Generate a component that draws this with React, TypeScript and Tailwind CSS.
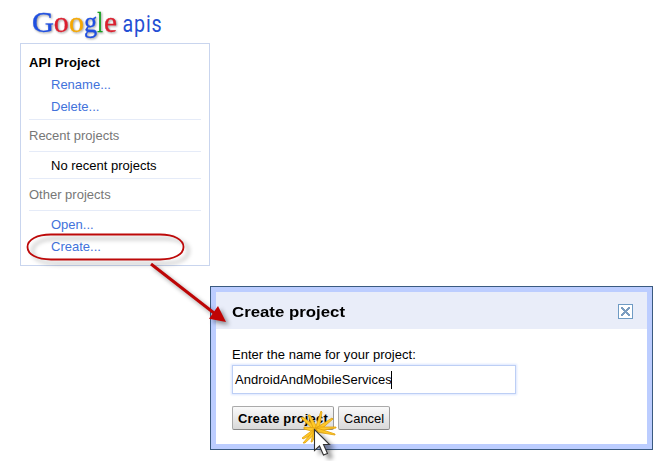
import React from "react";

function Logo() {
  return (
    <svg className="block h-[43px] w-[200px]" viewBox="0 0 200 43">
      <g
        className="font-['Liberation_Serif',serif] text-[29.5px] [filter:drop-shadow(1px_1px_1px_rgba(0,0,0,0.4))]"
        strokeWidth="0.3"
      >
        <text x="32" y="32" fill="#1f4fe0" stroke="#1f4fe0" textLength="22" lengthAdjust="spacingAndGlyphs">G</text>
        <text x="53.8" y="32" fill="#dc1f2e" stroke="#dc1f2e" textLength="15" lengthAdjust="spacingAndGlyphs">o</text>
        <text x="69" y="32" fill="#f5a800" stroke="#f5a800" textLength="15" lengthAdjust="spacingAndGlyphs">o</text>
        <text x="84" y="32" fill="#1f4fe0" stroke="#1f4fe0" textLength="13.2" lengthAdjust="spacingAndGlyphs">g</text>
        <text x="97.3" y="32" fill="#14a01e" stroke="#14a01e" textLength="5.6" lengthAdjust="spacingAndGlyphs">l</text>
        <text x="104" y="32" fill="#dc1f2e" stroke="#dc1f2e" textLength="13" lengthAdjust="spacingAndGlyphs">e</text>
      </g>
      <text
        x="122.5"
        y="32"
        fill="#2450d4"
        textLength="40"
        lengthAdjust="spacingAndGlyphs"
        className="font-[Roboto,sans-serif] text-[23.5px] tracking-[1px]"
      >
        apis
      </text>
    </svg>
  );
}

function MenuLink({ children }: { children: string }) {
  return <a className="block h-[22px] pl-[22px] leading-[22px] text-[#4272db]">{children}</a>;
}

function Divider() {
  return <div className="h-px bg-[#e5ebf8]" />;
}

function ProjectMenu() {
  return (
    <nav className="ml-5 h-[223px] w-[190px] border border-[#c9d5ee] px-2 pt-2 text-[#777]">
      <div className="h-[22px] font-bold leading-[22px] tracking-[0.15px] text-black">API Project</div>
      <MenuLink>Rename...</MenuLink>
      <MenuLink>Delete...</MenuLink>
      <div className="h-px" />
      <Divider />
      <div className="h-[31px] leading-[31px]">Recent projects</div>
      <Divider />
      <div className="h-[26px] pl-[22px] leading-[27px] text-black">No recent projects</div>
      <Divider />
      <div className="h-[31px] leading-[31px]">Other projects</div>
      <Divider />
      <div className="h-[3px]" />
      <MenuLink>Open...</MenuLink>
      <MenuLink>Create...</MenuLink>
    </nav>
  );
}

function CreateDialog() {
  return (
    <section className="ml-[210px] mt-5 h-[164px] w-[443px] border border-[#3a5a80]">
      <div className="h-full border-[5px] border-[#bccdff] bg-white">
        <header className="flex h-[37px] items-center justify-between bg-[#e9edf9] pl-4 pr-[14px]">
          <h1 className="origin-left scale-x-[1.12] pt-[2px] text-[15px] font-bold leading-[38px] text-black">Create project</h1>
          <svg className="mt-px size-[15px]" viewBox="0 0 15 15" shapeRendering="crispEdges">
            <path d="M.5.5h14v14H.5z" fill="#fff" stroke="#6f9bc4" />
            <path
              d="M3 3h2v1h1v1h1v1h1V5h1V4h1V3h2v2h-1v1h-1v1H9v1h1v1h1v1h1v2h-2v-1H9v-1H8V9H7v1H6v1H5v1H3v-2h1V9h1V8h1V7H5V6H4V5H3z"
              fill="#7b9dc0"
            />
          </svg>
        </header>
        <div className="px-4 pt-[17px]">
          <label className="block h-[19px] leading-[18px] tracking-[0.03px]">Enter the name for your project:</label>
          <div className="flex h-[29px] w-[284px] items-center border border-[#bdcff5] pl-[2px] shadow-[0_0_2px_1px_#dce7ff]">
            <span className="pt-px tracking-[0.03px]">AndroidAndMobileServices</span>
            <span className="-ml-px h-[18px] w-px bg-black" />
          </div>
          <div className="mt-3 flex gap-1">
            <button className="h-6 w-[102px] whitespace-nowrap rounded-[2px] border border-[#aaa] border-b-[#888] border-r-[#999] bg-linear-to-b from-[#fafafa] to-[#d9d9d9] pl-[5px] pt-px text-left font-bold tracking-[0.18px]">
              Create project
            </button>
            <button className="h-6 w-[52px] rounded-[2px] border border-[#aaa] border-b-[#888] border-r-[#999] bg-linear-to-b from-[#fafafa] to-[#d9d9d9] pt-px text-center">
              Cancel
            </button>
          </div>
        </div>
      </div>
    </section>
  );
}

function Annotations() {
  return (
    <svg className="pointer-events-none absolute left-0 top-0 h-[461px] w-[659px]" viewBox="0 0 659 461">
      <g className="[filter:drop-shadow(5px_4px_2px_rgba(0,0,0,0.32))]">
        <path
          d="M51 234.5H160C174 234.5 183.5 239.5 183.5 247S174 259.5 160 259.5H51C37 259.5 27.5 254.5 27.5 247S37 234.5 51 234.5Z"
          fill="none"
          stroke="#bd0909"
          strokeWidth="1.8"
        />
      </g>
      <g className="[filter:drop-shadow(3px_3px_2px_rgba(0,0,0,0.4))]">
        <path d="M151 264L214 313" stroke="#bd0505" strokeWidth="3" />
        <path d="M218 306L226 322L209 318.7Z" fill="#c00404" />
      </g>
      <g fill="#ffc928" stroke="#dfa00c" strokeWidth="0.8" strokeLinejoin="round">
        <path d="M315 431L301 418L303 417L317 428Z" />
        <path d="M314 430L308 415L310 415L318 429Z" />
        <path d="M315 429L321 411L322 412L319 430Z" />
        <path d="M316 428L332 418L333 419L319 431Z" />
        <path d="M317 427L336 427V428L318 431Z" />
        <path d="M317 428L335 434V435L316 432Z" />
        <path d="M316 428L304 427V429L315 432Z" />
        <path d="M314 429L302 438L303 439L317 432Z" />
        <path d="M314 430L303 443L305 443L318 431Z" />
        <path d="M314 430L311 442H312L318 431Z" />
      </g>
      <path
        d="M314.5 429.5V450.5L319.5 446L323.5 455L327.5 453.5L323.5 444.5H329.5Z"
        fill="#fff"
        stroke="#333"
        strokeWidth="1.1"
        className="[filter:drop-shadow(5px_4px_2px_rgba(0,0,0,0.4))]"
      />
    </svg>
  );
}

export default function App() {
  return (
    <main className="relative h-[461px] w-[659px] overflow-hidden bg-white font-['Liberation_Sans',Arial,sans-serif] text-[13px] text-black">
      <Logo />
      <ProjectMenu />
      <CreateDialog />
      <Annotations />
    </main>
  );
}
